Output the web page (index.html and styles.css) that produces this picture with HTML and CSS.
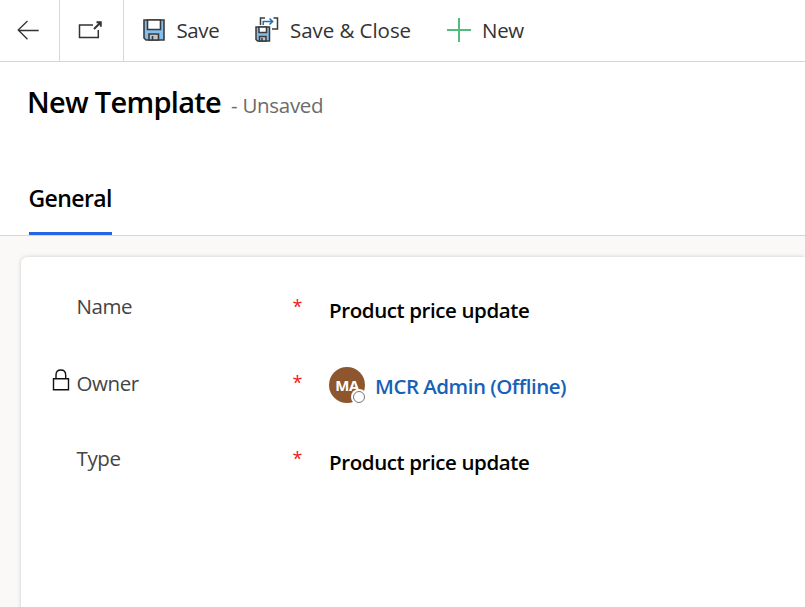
FILE: index.html
```html
<!DOCTYPE html>
<html lang="en">
<head>
<meta charset="utf-8">
<title>New Template</title>
<link rel="stylesheet" href="styles.css">
</head>
<body>
<div class="page">
  <nav class="toolbar">
    <button class="tool back" aria-label="Back">
      <svg width="22" height="20" viewBox="0 0 22 20" fill="none" stroke="#333" stroke-width="1.3"><path d="M10.500 1 1.200 10l9.300 9.300M1.200 10.500h20.500"/></svg>
    </button>
    <button class="tool popout" aria-label="Open in new window">
      <svg width="24" height="18" viewBox="0 0 24 18" fill="none" stroke="#333" stroke-width="1.500"><path d="M15 4H1.500v12.500h18.800V9"/><path d="M16 8 22.500 1.500M18.500 1.300h4.300v4.500" stroke-width="1.900"/></svg>
    </button>
    <button class="tool save">
      <svg width="22" height="22" viewBox="0 0 22 22" stroke="#3b3b3b" stroke-width="1.600"><path d="M1 1h20v20H3l-2-2z" fill="#83beec"/><path d="M4.500 1h13v9.500h-13z" fill="#fff"/><path d="M6 15h9.500v6H6z" fill="#c4c4c4"/><path d="M9.500 17v4" fill="none"/></svg>
      <span class="save-text">Save</span>
    </button>
    <button class="tool save-close">
      <svg width="24" height="25" viewBox="0 0 24 25" fill="none" stroke="#3b3b3b" stroke-width="1.500"><path d="M5.500 8V1H10M18.500 1h4v11H17"/><path d="M8.200 8V4.500h9M14.500 1.500l3.200 3-3.200 3" stroke="#1c6fb8"/><path d="M1 10h13.500v14H2.500L1 22.500z" fill="#83beec"/><path d="M4 10h7.500v5.500H4z" fill="#fff"/><path d="M4.500 19.500h6.500V24H4.500z" fill="#c4c4c4"/><path d="M7 21v3"/></svg>
      <span class="close-text">Save &amp; Close</span>
    </button>
    <button class="tool new">
      <svg width="24" height="24" viewBox="0 0 24 24" stroke="#55ba7d" stroke-width="2"><path d="M12 0v24M0 12h24"/></svg>
      <span class="new-text">New</span>
    </button>
  </nav>
  <header class="heading">
    <h1 class="title">New Template</h1>
    <span class="status">- Unsaved</span>
  </header>
  <div class="tabs"><a class="tab">General</a></div>
  <main class="content">
    <section class="card">
      <div class="field">
        <span class="lock"></span>
        <span class="label">Name</span>
        <span class="required">*</span>
        <span class="value">Product price update</span>
      </div>
      <div class="field">
        <span class="lock"><svg width="18" height="22" viewBox="0 0 18 22" fill="none" stroke="#111" stroke-width="1.400"><path d="M1.500 9.700h15v11h-15zM4 9.500V6c0-3 1.800-5 4.800-5s4.900 2 4.900 5v3.500"/></svg></span>
        <span class="label owner">Owner</span>
        <span class="required">*</span>
        <span class="person"><span class="avatar">MA<i class="presence"></i></span><a class="link">MCR Admin (Offline)</a></span>
      </div>
      <div class="field">
        <span class="lock"></span>
        <span class="label">Type</span>
        <span class="required">*</span>
        <span class="value">Product price update</span>
      </div>
    </section>
  </main>
</div>
</body>
</html>
```
FILE: styles.css
```css
* { box-sizing: border-box; }
body { margin: 0; background: #fff; font-family: "Open Sans", "Noto Sans", sans-serif; font-size: 20.5px; color: #333; }
.page { height: 607px; display: flex; flex-direction: column; overflow: hidden; }
.toolbar { height: 62px; flex: none; display: flex; border-bottom: 1px solid #d6d6d6; }
.tool { display: flex; align-items: center; padding: 0 0 2px; border: 0; background: none; font: inherit; color: inherit; white-space: nowrap; }
.tool svg { flex: none; }
.back { width: 60px; padding-left: 17px; border-right: 1px solid #d6d6d6; }
.popout { width: 64px; padding-left: 18px; border-right: 1px solid #d6d6d6; }
.save { width: 131px; padding-left: 19px; gap: 11.5px; }
.save-close { width: 192px; gap: 11px; }
.new { gap: 11px; }
.save-text { letter-spacing: -.4px; }
.close-text { letter-spacing: -.05px; }
.new-text { letter-spacing: -.3px; }
.heading { height: 108px; flex: none; display: flex; align-items: baseline; padding: 18px 0 0 27px; gap: 10px; white-space: nowrap; }
.title { margin: 0; font-size: 29px; line-height: 44px; font-weight: 600; color: #000; letter-spacing: -.7px; }
.status { color: #6b6b6b; letter-spacing: -.3px; }
.tabs { height: 66px; flex: none; display: flex; padding-left: 29px; border-bottom: 1px solid #d6d6d6; }
.tab { width: 83px; padding-top: 12px; border-bottom: 3px solid #2266e3; font-size: 23px; line-height: 32px; font-weight: 600; color: #000; white-space: nowrap; letter-spacing: -.6px; text-indent: -.5px; }
.content { flex: 1; padding: 21px 0 0 21px; background: #faf9f8; }
.card { height: 380px; padding: 16px 0 0 31px; background: #fff; border-radius: 6px 0 0 0; box-shadow: 0 0 4px rgba(0,0,0,.18); }
.field { height: 76px; display: grid; grid-template-columns: 24.5px 216px 36.5px 1fr; align-items: start; white-space: nowrap; }
.lock { padding-top: 20px; line-height: 0; }
.label { padding-top: 18px; line-height: 30px; color: #444; letter-spacing: -.4px; }
.owner { padding-top: 19px; }
.required { padding-top: 18px; line-height: 30px; font-size: 18px; color: #f01818; }
.value { padding-top: 22px; line-height: 30px; font-weight: 600; color: #000; letter-spacing: -.4px; }
.person { display: flex; align-items: center; padding-top: 18px; gap: 10px; }
.avatar { position: relative; width: 36px; height: 36px; border-radius: 50%; background: #8e562e; color: #fff; font-size: 15px; line-height: 37px; font-weight: 700; text-align: center; letter-spacing: -.5px; }
.presence { position: absolute; left: 24px; top: 24px; width: 12px; height: 12px; border: 1px solid #777; border-radius: 50%; background: #fff; box-shadow: 0 0 0 2px #fff; }
.link { padding-top: 2px; font-weight: 600; color: #1960b8; line-height: 30px; letter-spacing: -.5px; }
```
